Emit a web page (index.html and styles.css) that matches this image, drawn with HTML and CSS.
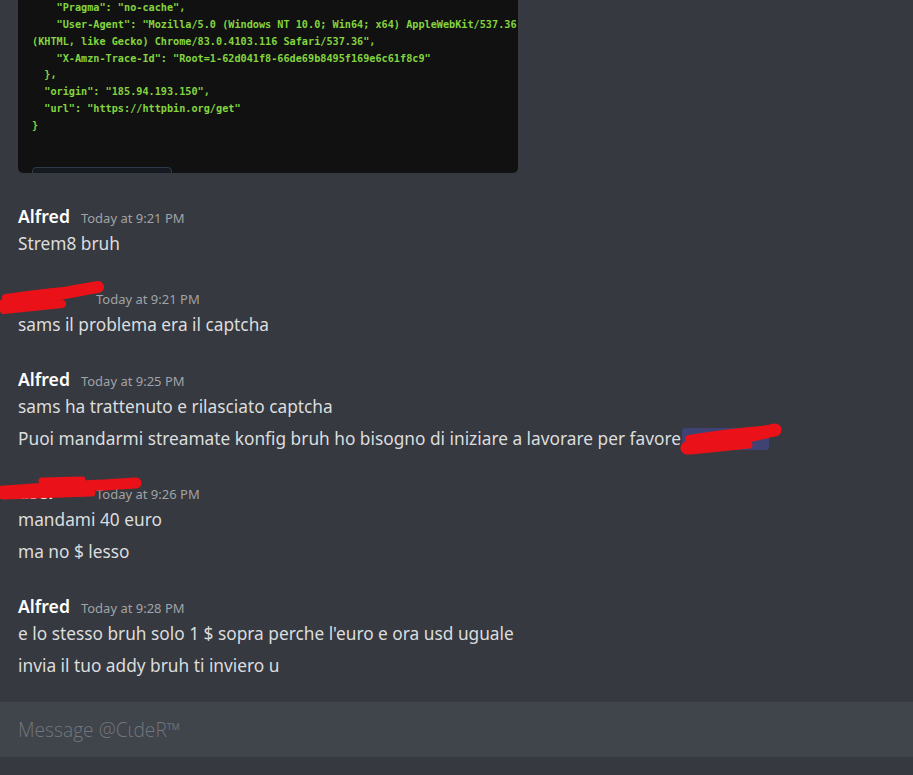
FILE: index.html
```html
<!DOCTYPE html>
<html>
<head>
<meta charset="utf-8">
<link rel="stylesheet" href="styles.css">
</head>
<body>
<div class="chat">
  <div class="embed">
<pre class="code">    "Pragma": "no-cache",
    "User-Agent": "Mozilla/5.0 (Windows NT 10.0; Win64; x64) AppleWebKit/537.36
(KHTML, like Gecko) Chrome/83.0.4103.116 Safari/537.36",
    "X-Amzn-Trace-Id": "Root=1-62d041f8-66de69b8495f169e6c61f8c9"
  },
  "origin": "185.94.193.150",
  "url": "https://httpbin.org/get"
}</pre>
    <div class="embed-btn"></div>
  </div>

  <div class="group">
    <div class="head"><span class="name">Alfred</span><span class="time">Today at 9:21 PM</span></div>
    <div class="line">Strem8 bruh</div>
  </div>

  <div class="group">
    <div class="head"><span class="name hidden-name">user</span><span class="time">Today at 9:21 PM</span>
      <svg class="scribble s1" width="110" height="40" viewBox="0 0 110 40"><path d="M4 28 C30 24 60 16 98 10" stroke-width="12"/><path d="M6 21 C30 18 55 14 84 12" stroke-width="8"/><path d="M4 33 L62 27" stroke-width="8"/></svg>
    </div>
    <div class="line">sams il problema era il captcha</div>
  </div>

  <div class="group">
    <div class="head"><span class="name">Alfred</span><span class="time">Today at 9:25 PM</span></div>
    <div class="line">sams ha trattenuto e rilasciato captcha</div>
    <div class="line">Puoi mandarmi streamate konfig bruh ho bisogno di iniziare a lavorare per favore<span class="mention"><svg class="scribble s3" width="110" height="40" viewBox="0 0 110 40"><path d="M8 30 C30 27 60 20 96 12" stroke-width="13"/><path d="M10 21 C40 16 70 12 98 11" stroke-width="8"/><path d="M12 33 L70 27" stroke-width="7"/></svg></span></div>
  </div>

  <div class="group">
    <div class="head"><span class="name hidden-name">user</span><span class="time">Today at 9:26 PM</span>
      <svg class="scribble s2" width="150" height="30" viewBox="0 0 150 30"><path d="M3 18 C40 15 90 13 136 10" stroke-width="11"/><path d="M42 8 L82 7" stroke-width="7"/><path d="M3 23 L92 20" stroke-width="7"/></svg>
    </div>
    <div class="line">mandami 40 euro</div>
    <div class="line">ma no $ lesso</div>
  </div>

  <div class="group">
    <div class="head"><span class="name">Alfred</span><span class="time">Today at 9:28 PM</span></div>
    <div class="line">e lo stesso bruh solo 1 $ sopra perche l'euro e ora usd uguale</div>
    <div class="line">invia il tuo addy bruh ti inviero u</div>
  </div>
</div>
<div class="composer"><span class="placeholder">Message @CιdeR™</span></div>
</body>
</html>
```
FILE: styles.css
```css
html, body {
  margin: 0;
  padding: 0;
  height: 100%;
}
body {
  background: #36393f;
  font-family: "Noto Sans", "Open Sans", sans-serif;
  display: flex;
  flex-direction: column;
  overflow: hidden;
}
.chat {
  flex: 1;
  overflow: hidden;
  padding: 0 18px;
}
.embed {
  width: 500px;
  height: 173px;
  background: #111111;
  border-radius: 0 0 5px 5px;
  overflow: hidden;
  box-sizing: border-box;
  padding: 0 14px;
}
.code {
  margin: 0;
  font-family: "DejaVu Sans Mono", monospace;
  font-weight: bold;
  font-size: 10.2px;
  line-height: 16.86px;
  color: #84d43f;
  white-space: pre;
}
.embed-btn {
  margin-top: 32px;
  width: 140px;
  height: 20px;
  border: 1px solid #2d3b4b;
  border-radius: 4px 4px 0 0;
  background: #151a21;
  box-sizing: border-box;
}
.group {
  margin-top: 31.5px;
}
.group:first-of-type {
  margin-top: 31px;
}
.head {
  position: relative;
  height: 22px;
  line-height: 22px;
  display: flex;
  align-items: baseline;
}
.name {
  color: #ffffff;
  font-weight: 600;
  font-size: 17.6px;
  margin-right: 11px;
}
.hidden-name {
  display: inline-block;
  width: 67px;
  overflow: hidden;
}
.time {
  color: #a0a3a7;
  font-size: 13px;
}
.line {
  color: #dcddde;
  font-size: 17.3px;
  line-height: 22px;
  margin-top: 6px;
}
.line + .line {
  margin-top: 10px;
}
.mention {
  position: relative;
  display: inline-block;
  width: 87px;
  height: 22px;
  vertical-align: -5px;
  background: #3e4373;
  border-radius: 3px;
  margin-left: 1px;
}
.scribble {
  position: absolute;
  fill: none;
  stroke: #ea1218;
  stroke-width: 10;
  stroke-linecap: round;
  stroke-linejoin: round;
}
.s1 {
  left: -18px;
  top: -9px;
}
.s2 {
  left: -18px;
  top: -8px;
}
.s3 {
  left: -3px;
  top: -10px;
}
.composer {
  height: 55px;
  margin-bottom: 18px;
  background: #40444b;
  display: flex;
  align-items: center;
  padding-left: 18px;
}
.placeholder {
  color: #72767d;
  font-family: "Open Sans", "Noto Sans", sans-serif;
  font-weight: 300;
  font-size: 19.2px;
}
```
